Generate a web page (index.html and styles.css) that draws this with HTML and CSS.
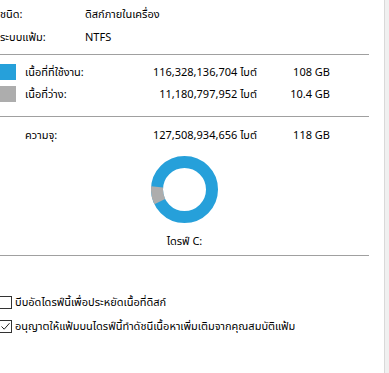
FILE: index.html
```html
<!DOCTYPE html>
<html lang="th">
<head>
<meta charset="utf-8">
<title>คุณสมบัติ ไดรฟ์ C:</title>
<link rel="stylesheet" href="styles.css">
</head>
<body>
<div class="page">
  <div class="info">
    <div class="irow"><span class="ilbl">ชนิด:</span><span>ดิสก์ภายในเครื่อง</span></div>
    <div class="irow"><span class="ilbl">ระบบแฟ้ม:</span><span>NTFS</span></div>
  </div>
  <div class="sep sep-a"></div>
  <div class="usage">
    <span class="swatch used"></span><span class="ulbl">เนื้อที่ที่ใช้งาน:</span><span class="bytes">116,328,136,704 ไบต์</span><span class="gb">108 GB</span>
    <span class="swatch free"></span><span class="ulbl">เนื้อที่ว่าง:</span><span class="bytes">11,180,797,952 ไบต์</span><span class="gb">10.4 GB</span>
  </div>
  <div class="sep sep-b"></div>
  <div class="usage cap">
    <span></span><span class="ulbl">ความจุ:</span><span class="bytes">127,508,934,656 ไบต์</span><span class="gb">118 GB</span>
  </div>
  <div class="chart">
    <svg class="donut" width="67" height="67" viewBox="0 0 67 67">
      <circle cx="33.5" cy="33.5" r="27.5" fill="none" stroke="#26a0da" stroke-width="12"/>
      <circle cx="33.5" cy="33.5" r="27.5" fill="none" stroke="#adadad" stroke-width="12" stroke-dasharray="15.15 200" transform="rotate(154 33.5 33.5)"/>
    </svg>
    <div class="drive">ไดรฟ์ C:</div>
  </div>
  <div class="sep sep-c"></div>
  <div class="checks">
    <label class="check"><span class="box"></span>บีบอัดไดรฟ์นี้เพื่อประหยัดเนื้อที่ดิสก์</label>
    <label class="check"><span class="box"><svg width="11" height="11" viewBox="0 0 11 11"><path d="M1.5 5.5 L4.2 8.2 L9.5 2.2" fill="none" stroke="#222" stroke-width="1"/></svg></span>อนุญาตให้แฟ้มบนไดรฟ์นี้ทำดัชนีเนื้อหาเพิ่มเติมจากคุณสมบัติแฟ้ม</label>
  </div>
</div>
</body>
</html>
```

FILE: styles.css
```css
html, body {
  margin: 0;
  padding: 0;
}
body {
  background: #f0f0f0;
  width: 389px;
  height: 373px;
  overflow: hidden;
  font-family: "Leelawadee UI", Tahoma, "Noto Sans Thai", "Noto Sans Thai UI", Loma, Garuda, "Waree", "Noto Sans", "DejaVu Sans", sans-serif;
  font-size: 11px;
  color: #000;
}
.page {
  width: 385px;
  height: 373px;
  background: #fff;
  border-right: 1px solid #d9d9d9;
  box-sizing: border-box;
}
.info {
  padding-top: 3px;
}
.irow {
  display: flex;
  height: 23px;
  line-height: 23px;
}
.ilbl {
  width: 85px;
}
.sep {
  height: 1px;
  width: 369px;
  background: #a0a0a0;
}
.sep-a { margin-top: 5px; }
.sep-b { margin-top: 11px; }
.sep-c { margin-top: 4px; }
.usage {
  display: grid;
  grid-template-columns: 25px 110px 122px 73px;
  grid-auto-rows: 22px;
  align-items: center;
  margin-top: 6px;
  white-space: nowrap;
}
.usage.cap {
  margin-top: 7px;
}
.swatch {
  width: 16px;
  height: 16px;
}
.swatch.used { background: #26a0da; }
.swatch.free { background: #adadad; }
.bytes, .gb {
  text-align: right;
}
.chart {
  width: 369px;
  display: flex;
  flex-direction: column;
  align-items: center;
}
.donut {
  display: block;
  margin-top: 10px;
}
.drive {
  margin-top: 10px;
  height: 18px;
  line-height: 18px;
}
.checks {
  margin-top: 34px;
}
.check {
  display: flex;
  align-items: center;
  height: 24px;
  white-space: nowrap;
}
.box {
  width: 11px;
  height: 11px;
  border: 1px solid #333;
  margin-left: -1px;
  margin-right: 3px;
  display: flex;
  align-items: center;
  justify-content: center;
  flex: none;
}
.box svg { display: block; }
```
